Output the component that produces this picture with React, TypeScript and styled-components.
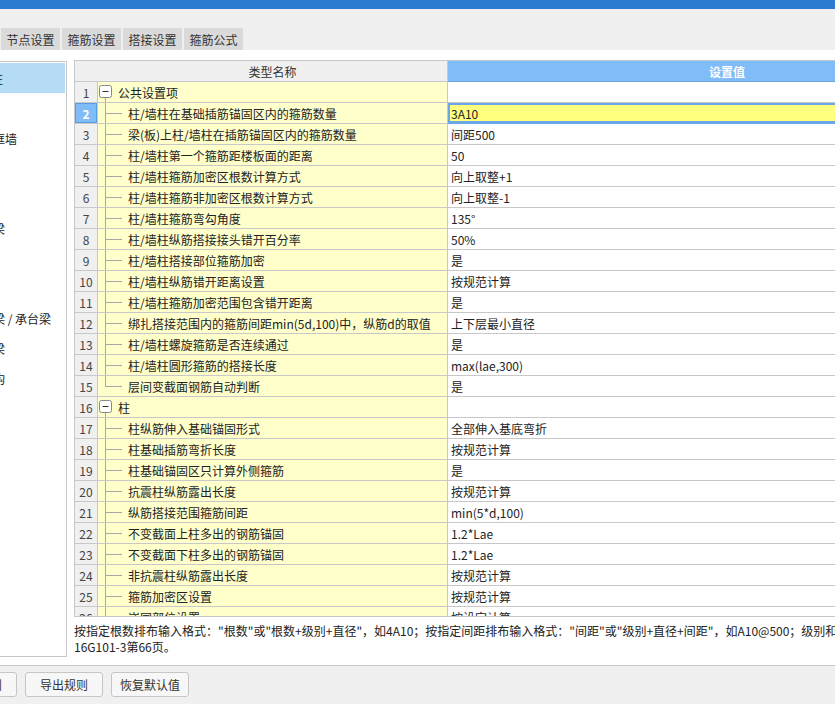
import React from 'react';
import styled, { createGlobalStyle } from 'styled-components';

const GlobalStyle = createGlobalStyle`
  html, body {
    margin: 0;
    padding: 0;
    overflow: hidden;
  }
  body {
    font-family: "Noto Sans CJK SC", "Noto Sans", sans-serif;
    font-size: 12px;
    color: #333;
  }
`;

type RowData = {
  name: string;
  value?: string;
  group?: boolean;
  last?: boolean;
};

const rows: RowData[] = [
  { name: '公共设置项', group: true },
  { name: '柱/墙柱在基础插筋锚固区内的箍筋数量', value: '3A10' },
  { name: '梁(板)上柱/墙柱在插筋锚固区内的箍筋数量', value: '间距500' },
  { name: '柱/墙柱第一个箍筋距楼板面的距离', value: '50' },
  { name: '柱/墙柱箍筋加密区根数计算方式', value: '向上取整+1' },
  { name: '柱/墙柱箍筋非加密区根数计算方式', value: '向上取整-1' },
  { name: '柱/墙柱箍筋弯勾角度', value: '135°' },
  { name: '柱/墙柱纵筋搭接接头错开百分率', value: '50%' },
  { name: '柱/墙柱搭接部位箍筋加密', value: '是' },
  { name: '柱/墙柱纵筋错开距离设置', value: '按规范计算' },
  { name: '柱/墙柱箍筋加密范围包含错开距离', value: '是' },
  { name: '绑扎搭接范围内的箍筋间距min(5d,100)中，纵筋d的取值', value: '上下层最小直径' },
  { name: '柱/墙柱螺旋箍筋是否连续通过', value: '是' },
  { name: '柱/墙柱圆形箍筋的搭接长度', value: 'max(lae,300)' },
  { name: '层间变截面钢筋自动判断', value: '是', last: true },
  { name: '柱', group: true },
  { name: '柱纵筋伸入基础锚固形式', value: '全部伸入基底弯折' },
  { name: '柱基础插筋弯折长度', value: '按规范计算' },
  { name: '柱基础锚固区只计算外侧箍筋', value: '是' },
  { name: '抗震柱纵筋露出长度', value: '按规范计算' },
  { name: '纵筋搭接范围箍筋间距', value: 'min(5*d,100)' },
  { name: '不变截面上柱多出的钢筋锚固', value: '1.2*Lae' },
  { name: '不变截面下柱多出的钢筋锚固', value: '1.2*Lae' },
  { name: '非抗震柱纵筋露出长度', value: '按规范计算' },
  { name: '箍筋加密区设置', value: '按规范计算' },
  { name: '嵌固部位设置', value: '按设定计算' },
];

const sideItems = [
  '柱 / 墙柱',
  '剪力墙',
  '人防门框墙',
  '连梁',
  '框架梁',
  '非框架梁',
  '板',
  '基础',
  '基础主梁 / 承台梁',
  '基础次梁',
  '砌体结构',
];

const tabs = ['节点设置', '箍筋设置', '搭接设置', '箍筋公式'];

const Page = styled.div`
  width: 100%;
  height: 704px;
  overflow: hidden;
  background: #f0f0f0;
  display: flex;
  flex-direction: column;
`;

const TitleBar = styled.div`
  height: 9px;
  background: #2b7bd3;
  flex: none;
`;

const TabStrip = styled.div`
  display: flex;
  gap: 2px;
  padding: 19px 0 0 1px;
  height: 22px;
  flex: none;
`;

const Tab = styled.div`
  width: 59px;
  height: 22px;
  background: #dadada;
  color: #333;
  font-size: 12px;
  display: flex;
  align-items: center;
  justify-content: center;
`;

const Body = styled.div`
  background: #fff;
  height: 616px;
  flex: none;
  display: flex;
  gap: 7px;
  padding-top: 10px;
  box-sizing: border-box;
  border-bottom: 1px solid #c8c8c8;
`;

const Sidebar = styled.div`
  width: 67px;
  height: 596px;
  margin-top: 1px;
  flex: none;
  box-sizing: border-box;
  border: 1px solid #c8c8c8;
  border-left: none;
  overflow: hidden;
  padding-top: 1px;
`;

// the list is scrolled sideways, so only the right end of each label shows
const SideList = styled.div`
  margin-left: -43px;
  width: 108px;
`;

const SideItem = styled.div<{ $selected?: boolean }>`
  height: 30px;
  display: flex;
  align-items: center;
  white-space: nowrap;
  font-size: 12px;
  color: #222;
  background: ${(p) => (p.$selected ? '#b5dbf5' : 'transparent')};
`;

const Main = styled.div`
  width: 933px;
  flex: none;
  display: flex;
  flex-direction: column;
`;

const Grid = styled.div`
  height: 557px;
  box-sizing: border-box;
  border: 1px solid #c8c8c8;
  border-right: none;
  overflow: hidden;
`;

const Row = styled.div`
  display: grid;
  grid-template-columns: 23px 350px 1fr;
  height: 21px;
`;

const Cell = styled.div`
  box-sizing: border-box;
  height: 21px;
  border-bottom: 1px solid #c8c8c8;
  border-right: 1px solid #c8c8c8;
  display: flex;
  align-items: center;
  white-space: nowrap;
  overflow: hidden;
  font-size: 12px;
`;

const NumCell = styled(Cell)<{ $active?: boolean }>`
  justify-content: center;
  background: ${(p) => (p.$active ? '#80bcf7' : '#f0f0f0')};
  color: ${(p) => (p.$active ? '#fff' : '#444')};
  font-weight: ${(p) => (p.$active ? 700 : 400)};
  box-shadow: ${(p) => (p.$active ? 'inset 0 0 0 1px #5d9de2' : 'none')};
`;

const CornerCell = styled(Cell)`
  background: #f0f0f0;
  border-right: none;
`;

const HeadName = styled(Cell)`
  background: #f0f0f0;
  justify-content: center;
  color: #333;
`;

const HeadValue = styled(Cell)`
  background: #80bcf7;
  border-bottom-color: #6ea3dc;
  justify-content: center;
  color: #fff;
  font-weight: 700;
`;

const NameCell = styled(Cell)`
  background: #ffffcc;
  color: #222;
`;

const ValueCell = styled(Cell)<{ $selected?: boolean }>`
  padding-left: 3px;
  color: #222;
  background: ${(p) => (p.$selected ? '#ffff80' : '#fff')};
  box-shadow: ${(p) => (p.$selected ? 'inset 0 0 0 2px #6aa6e8' : 'none')};
  border-bottom-color: ${(p) => (p.$selected ? '#6aa6e8' : '#c8c8c8')};
`;

const Hint = styled.div`
  margin-top: 6px;
  font-size: 12px;
  line-height: 16px;
  color: #222;
`;

const HintLine = styled.div`
  white-space: nowrap;
`;

const Footer = styled.div`
  display: flex;
  gap: 8px;
  margin-left: -61px;
  padding-top: 6px;
`;

const Button = styled.div`
  width: 78px;
  height: 25px;
  box-sizing: border-box;
  border: 1px solid #c6c6c6;
  border-radius: 3px;
  background: #f7f7f7;
  display: flex;
  align-items: center;
  justify-content: center;
  font-size: 12px;
  color: #333;
`;

const TreeLine = '#a8a8a8';

const GroupToggle: React.FC = () => (
  <svg width="20" height="20" viewBox="0 0 20 20" style={{ flex: 'none' }}>
    <line x1="7.5" y1="15" x2="7.5" y2="20" stroke={TreeLine} />
    <rect x="1.5" y="3.5" width="12" height="12" rx="2" fill="#fff" stroke="#888" />
    <line x1="4.5" y1="9.5" x2="10.5" y2="9.5" stroke="#333" />
  </svg>
);

const Branch: React.FC<{ last?: boolean }> = ({ last }) => (
  <svg width="30" height="20" viewBox="0 0 30 20" style={{ flex: 'none' }}>
    <line x1="7.5" y1="0" x2="7.5" y2={last ? 10.5 : 20} stroke={TreeLine} />
    <line x1="7.5" y1="10.5" x2="24" y2="10.5" stroke={TreeLine} />
  </svg>
);

const App: React.FC = () => {
  return (
    <Page>
      <GlobalStyle />
      <TitleBar />
      <TabStrip>
        {tabs.map((t) => (
          <Tab key={t}>{t}</Tab>
        ))}
      </TabStrip>

      <Body>
        <Sidebar>
          <SideList>
            {sideItems.map((s, i) => (
              <SideItem key={s} $selected={i === 0}>
                {s}
              </SideItem>
            ))}
          </SideList>
        </Sidebar>

        <Main>
          <Grid>
            <Row>
              <CornerCell />
              <HeadName>类型名称</HeadName>
              <HeadValue>设置值</HeadValue>
            </Row>
            {rows.map((r, i) => {
              const n = i + 1;
              return (
                <Row key={n}>
                  <NumCell $active={n === 2}>{n}</NumCell>
                  <NameCell>
                    {r.group ? <GroupToggle /> : <Branch last={r.last} />}
                    {r.name}
                  </NameCell>
                  <ValueCell $selected={n === 2}>{r.value}</ValueCell>
                </Row>
              );
            })}
          </Grid>
          <Hint>
            <HintLine>
              按指定根数排布输入格式："根数"或"根数+级别+直径"，如4A10；按指定间距排布输入格式："间距"或"级别+直径+间距"，如A10@500；级别和直径参见
            </HintLine>
            <HintLine>16G101-3第66页。</HintLine>
          </Hint>
        </Main>
      </Body>

      <Footer>
        <Button>导入规则</Button>
        <Button>导出规则</Button>
        <Button>恢复默认值</Button>
      </Footer>
    </Page>
  );
};

export default App;
